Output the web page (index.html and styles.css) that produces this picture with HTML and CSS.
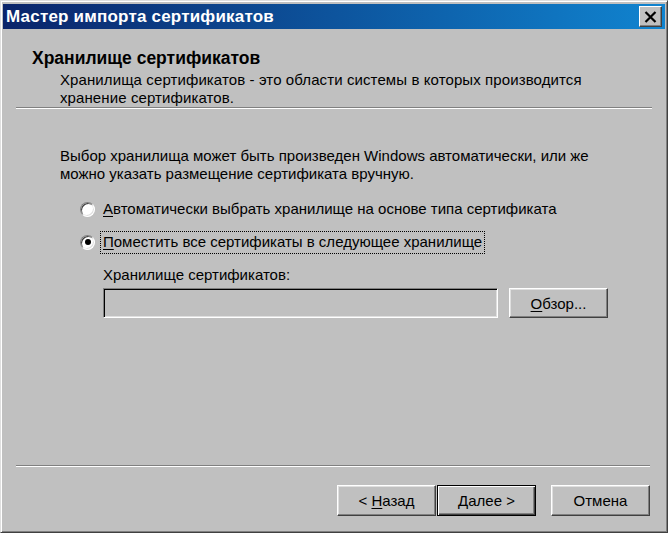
FILE: index.html
```html
<!DOCTYPE html>
<html lang="ru">
<head>
    <meta charset="UTF-8">
    <title>Мастер импорта сертификатов</title>
    <link rel="stylesheet" href="styles.css">
</head>
<body>
    <div class="window">
        <div class="titlebar">
            <span class="title">Мастер импорта сертификатов</span>
            <span class="close-btn">
                <svg width="13" height="12" viewBox="0 0 13 12">
                    <path d="M1.5 1 L11.5 11 M11.5 1 L1.5 11" stroke="#000" stroke-width="2.2" fill="none"/>
                </svg>
            </span>
        </div>

        <div class="content">
            <div class="header">
                <div class="header-title">Хранилище сертификатов</div>
                <div class="header-sub">Хранилища сертификатов - это области системы в которых производится<br>хранение сертификатов.</div>
            </div>
            <div class="separator"></div>

            <div class="page">
                <p class="intro">Выбор хранилища может быть произведен Windows автоматически, или же<br>можно указать размещение сертификата вручную.</p>

                <div class="option">
                    <span class="radio"></span>
                    <span class="label"><u>А</u>втоматически выбрать хранилище на основе типа сертификата</span>
                </div>
                <div class="option">
                    <span class="radio checked"></span>
                    <span class="label focused"><u>П</u>оместить все сертификаты в следующее хранилище</span>
                </div>

                <div class="store">
                    <div class="store-label">Хранилище сертификатов:</div>
                    <div class="store-row">
                        <div class="textbox"></div>
                        <span class="button"><span><u>О</u>бзор...</span></span>
                    </div>
                </div>
            </div>

            <div class="footer">
                <div class="separator bottom"></div>
                <div class="buttons">
                    <span class="button"><span>&lt; <u>Н</u>азад</span></span>
                    <span class="button default"><span><u>Д</u>алее &gt;</span></span>
                    <span class="button cancel"><span>Отмена</span></span>
                </div>
            </div>
        </div>
    </div>
</body>
</html>
```

FILE: styles.css
```css
body {
    margin: 0;
    background: #c0c0c0;
    font-family: 'Liberation Sans', Arial, sans-serif;
    color: #000;
}
.window {
    width: 668px;
    height: 533px;
    box-sizing: border-box;
    background: #c0c0c0;
    border: 1px solid;
    border-color: #dfdfdf #404040 #404040 #dfdfdf;
    box-shadow: inset 1px 1px 0 #fff, inset -1px -1px 0 #808080;
    padding: 3px 2px 2px 2px;
    display: flex;
    flex-direction: column;
}
.titlebar {
    height: 25px;
    background: linear-gradient(to right, #0a246a, #1084d0);
    display: flex;
    align-items: center;
    justify-content: space-between;
    padding: 0 3px 0 3px;
}
.title {
    color: #fff;
    font-weight: bold;
    font-size: 17px;
    letter-spacing: 0.2px;
}
.close-btn {
    width: 23px;
    height: 21px;
    box-sizing: border-box;
    background: #c0c0c0;
    border: 1px solid;
    border-color: #fff #404040 #404040 #fff;
    box-shadow: inset -1px -1px 0 #808080;
    display: flex;
    align-items: center;
    justify-content: center;
}
.content {
    flex: 1;
    display: flex;
    flex-direction: column;
}
.header {
    padding: 19px 0 0 29px;
}
.header-title {
    font-size: 17.5px;
    font-weight: bold;
    line-height: 20px;
}
.header-sub {
    font-size: 15px;
    letter-spacing: 0.1px;
    line-height: 18px;
    margin: 3px 0 0 28px;
}
.separator {
    margin: 0 13px;
    border-top: 1px solid #808080;
    border-bottom: 1px solid #fff;
}
.page {
    padding-left: 57px;
    font-size: 15px;
}
.intro {
    margin: 38px 0 0 0;
    line-height: 18px;
}
.option {
    display: flex;
    align-items: center;
    height: 22px;
    margin-top: 11px;
    padding-left: 20px;
}
.option:first-of-type {
    margin-top: 15px;
}
.radio {
    width: 13px;
    height: 13px;
    border-radius: 50%;
    background: #fff;
    border: 1px solid;
    border-color: #808080 #fff #fff #808080;
    box-shadow: inset 1px 1px 0 #404040, inset -1px -1px 0 #dfdfdf;
    position: relative;
    flex: none;
}
.radio.checked::after {
    content: '';
    position: absolute;
    left: 3.5px;
    top: 3.5px;
    width: 6px;
    height: 6px;
    border-radius: 50%;
    background: #000;
}
.label {
    margin-left: 5px;
    padding: 1px 2px 2px 2px;
    line-height: 18px;
    border: 1px solid transparent;
}
.label.focused {
    border: 1px dotted #000;
}
.store {
    padding-left: 43px;
}
.store-label {
    margin-top: 13px;
    line-height: 18px;
}
.store-row {
    display: flex;
    gap: 11px;
    margin-top: 4px;
}
.textbox {
    width: 395px;
    height: 30px;
    box-sizing: border-box;
    border: 1px solid;
    border-color: #808080 #fff #fff #808080;
    box-shadow: inset 1px 1px 0 #000, inset -1px -1px 0 #dfdfdf;
    background: #c0c0c0;
}
.button {
    width: 99px;
    height: 30px;
    box-sizing: border-box;
    border: 1px solid;
    border-color: #fff #404040 #404040 #fff;
    box-shadow: inset -1px -1px 0 #808080, inset 1px 1px 0 #dfdfdf;
    display: flex;
    align-items: center;
    justify-content: center;
    font-size: 15px;
}
.footer {
    margin-top: auto;
    padding-bottom: 14px;
}
.separator.bottom {
    margin-right: 15px;
}
.buttons {
    display: flex;
    justify-content: flex-end;
    padding-right: 15px;
    margin-top: 18px;
}
.buttons .button {
    height: 31px;
}
.button.default {
    border: 1px solid #000;
    box-shadow: inset 1px 1px 0 #fff, inset -1px -1px 0 #404040, inset -2px -2px 0 #808080;
    margin-left: 1px;
}
.button.cancel {
    margin-left: 15px;
}
u {
    text-decoration: underline;
    text-underline-offset: 2px;
}
```
